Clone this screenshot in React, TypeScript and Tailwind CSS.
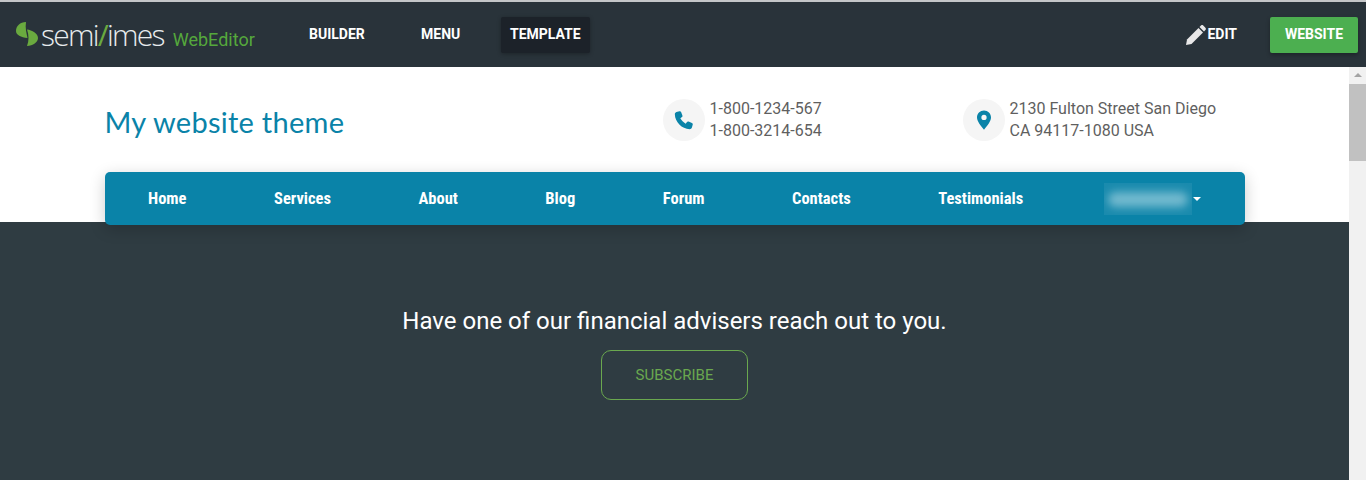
const navItems = ["Home", "Services", "About", "Blog", "Forum", "Contacts", "Testimonials"];

function Logo() {
  return (
    <div className="flex items-center w-[290px] pl-[16px] pt-[1px]">
      <svg width="22" height="24" viewBox="0 0 22 24" className="shrink-0 mb-[3px]">
        <path d="M10 0 C4 0 0 4 0 9 C0 13 5 15.5 11.5 16 C10.5 11 9 6 10 0 Z" fill="#6aaa3f" />
        <path d="M11 7.5 C16 8 22 11.5 22 16 C22 20 17 24 11 24 C13 19 13 13 11 7.5 Z" fill="#6aaa3f" />
      </svg>
      <span className="ml-[3px] font-['Open_Sans'] font-light text-[30px] leading-none tracking-[-1.75px] text-[#e8ecee] whitespace-nowrap">
        semi<span className="font-normal text-[#6aaa3f]">/</span>imes
      </span>
      <span className="ml-[9px] mt-[9px] font-['Roboto'] font-normal text-[18px] leading-none text-[#55a83c]">WebEditor</span>
    </div>
  );
}

function TopBar() {
  return (
    <header className="h-[67px] shrink-0 border-t-[2px] border-[#c4c6c8] bg-[#29333a] flex items-center font-['Roboto'] text-[14px] font-bold text-white">
      <Logo />
      <nav className="flex items-center">
        <span className="ml-[19px] w-[112px]">BUILDER</span>
        <span className="w-[80px]">MENU</span>
        <span className="h-[36px] px-[9px] flex items-center rounded-[2px] bg-[#1c2229] shadow-[0_1px_4px_rgba(0,0,0,0.3)]">
          TEMPLATE
        </span>
      </nav>
      <div className="ml-auto flex items-center">
        <span className="flex items-center">
          <svg width="20" height="20" viewBox="0 0 20 20">
            <path d="M0 20 L1 14.5 L12.5 3 L17 7.5 L5.5 19 Z" fill="#e8e8e8" />
            <path d="M13.5 2 L15 0.5 C15.7 -0.1 16.5 -0.1 17.2 0.5 L19.4 2.8 C20 3.5 20 4.3 19.4 5 L18 6.5 Z" fill="#e8e8e8" />
          </svg>
          <span className="ml-[1px]">EDIT</span>
        </span>
        <span className="ml-[33px] mr-[8px] w-[88px] h-[36px] flex items-center justify-center rounded-[2px] bg-[#4caf50] shadow-[0_2px_4px_rgba(0,0,0,0.3)]">
          WEBSITE
        </span>
      </div>
    </header>
  );
}

function ContactIcon({ children }: { children: React.ReactNode }) {
  return (
    <div className="w-[42px] h-[42px] rounded-full bg-[#f5f5f5] flex items-center justify-center text-[#0a83a8]">
      {children}
    </div>
  );
}

function SiteHeader() {
  return (
    <div className="h-[105px] flex items-center w-[1140px] mx-auto font-['Roboto'] text-[16px] leading-[22px] text-[#5f5f5f]">
      <h1 className="w-[558px] pt-[4px] font-['Lato'] font-normal text-[29px] tracking-[0.27px] text-[#0a83a8]">My website theme</h1>
      <div className="w-[300px] flex items-center gap-[5px]">
        <ContactIcon>
          <svg width="20" height="20" viewBox="0 0 24 24" fill="currentColor">
            <path d="M6.6 1.5 L2.9 2.5 C1.6 3 1 4 1 5.2 C1.2 14.6 9.4 22.8 18.8 23 C20 23 21 22.4 21.5 21.1 L22.5 17.4 C22.7 16.6 22.3 15.8 21.5 15.5 L17.5 13.9 C16.8 13.6 16 13.8 15.6 14.4 L14 16.4 C11.4 15.1 8.9 12.6 7.6 10 L9.6 8.4 C10.2 8 10.4 7.2 10.1 6.5 L8.5 2.5 C8.2 1.7 7.4 1.3 6.6 1.5 Z" />
          </svg>
        </ContactIcon>
        <div>
          <p>1-800-1234-567</p>
          <p>1-800-3214-654</p>
        </div>
      </div>
      <div className="flex items-center gap-[5px]">
        <ContactIcon>
          <svg width="14" height="20" viewBox="0 0 16 22">
            <path fillRule="evenodd" fill="currentColor" d="M8 0 C3.5 0 0 3.5 0 8 C0 12.5 4.5 17.5 8 22 C11.5 17.5 16 12.5 16 8 C16 3.5 12.5 0 8 0 Z M8 5 A3 3 0 1 1 8 11 A3 3 0 1 1 8 5 Z" />
          </svg>
        </ContactIcon>
        <div>
          <p>2130 Fulton Street San Diego</p>
          <p>CA 94117-1080 USA</p>
        </div>
      </div>
    </div>
  );
}

function MainNav() {
  return (
    <nav className="relative z-10 -mb-[3px] w-[1140px] h-[53px] mx-auto flex items-center pl-[43.5px] rounded-[5px] bg-[#0a83a8] shadow-[0_4px_16px_rgba(0,0,0,0.2)] font-['Roboto'] text-[16.5px] font-bold text-white">
      {navItems.map((item) => (
        <span key={item} className="mr-[87.5px] pt-[1px] [font-stretch:75%]">
          {item}
        </span>
      ))}
      <span className="-ml-[7px] w-[88px] h-[32px] overflow-hidden relative bg-[#1a8bae]">
        <span className="absolute left-[4px] right-[4px] top-[9px] h-[15px] rounded-full bg-[#72b9ce] blur-[4px]" />
      </span>
      <span className="ml-[1px] w-0 h-0 border-x-[4px] border-x-transparent border-t-[4px] border-t-white" />
    </nav>
  );
}

function Scrollbar() {
  return (
    <div className="w-[17px] shrink-0 bg-[#f1f1f1] flex flex-col items-center">
      <span className="mt-[6px] w-0 h-0 border-x-[4px] border-x-transparent border-b-[4px] border-b-[#a3a3a3]" />
      <span className="mt-[7px] w-full h-[77px] bg-[#c1c1c1]" />
    </div>
  );
}

export default function App() {
  return (
    <div className="h-[480px] flex flex-col overflow-hidden">
      <TopBar />
      <div className="flex flex-1 min-h-0">
        <main className="flex-1 min-w-0 flex flex-col">
          <section className="h-[155px] shrink-0 bg-white">
            <SiteHeader />
            <MainNav />
          </section>
          <section className="flex-1 bg-[#2f3c42] flex flex-col items-center pt-[83px] font-['Roboto']">
            <h2 className="text-[24px] leading-[33px] text-white">Have one of our financial advisers reach out to you.</h2>
            <button className="mt-[12px] w-[147px] h-[50px] rounded-[10px] border border-[#6aa84f] text-[15px] text-[#6aa84f]">
              SUBSCRIBE
            </button>
          </section>
        </main>
        <Scrollbar />
      </div>
    </div>
  );
}
